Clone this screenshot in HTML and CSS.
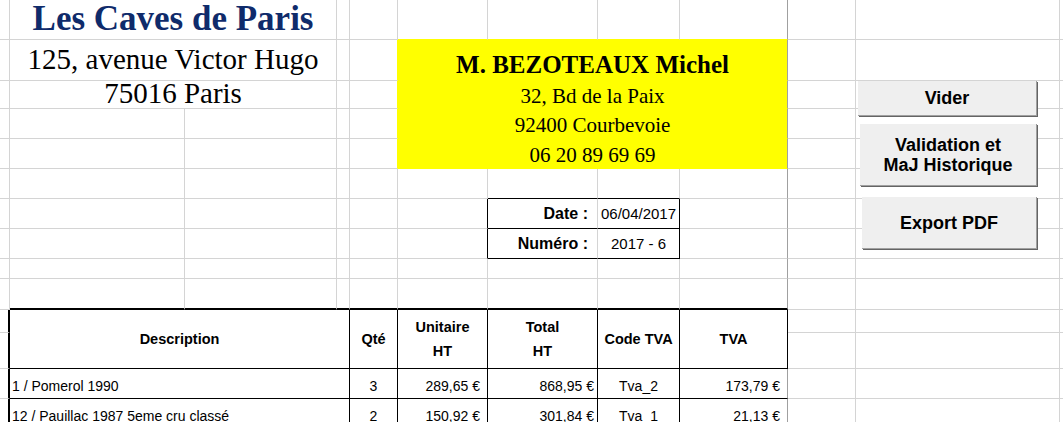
FILE: index.html
```html
<!DOCTYPE html>
<html lang="fr">
<head>
    <meta charset="UTF-8">
    <meta name="viewport" content="width=device-width, initial-scale=1.0">
    <title>Facture - Les Caves de Paris</title>
    <link rel="stylesheet" href="styles.css">
</head>
<body>
    <div class="sheet">
        <table class="grid">
            <colgroup>
                <col class="col-a"><col class="col-b"><col class="col-c"><col class="col-d">
                <col class="col-e"><col class="col-f"><col class="col-g"><col class="col-h">
                <col class="col-i"><col class="col-j"><col class="col-k"><col class="col-l">
            </colgroup>
            <tr class="row-1">
                <td></td>
                <td colspan="2" class="shop-name">Les Caves de Paris</td>
                <td></td><td></td>
                <td class="fill-top"></td><td class="fill-top"></td><td class="fill-top"></td>
                <td class="fill-top page-break"></td>
                <td></td><td></td><td></td>
            </tr>
            <tr class="row-2">
                <td></td>
                <td colspan="2" class="shop-address street">125, avenue Victor Hugo</td>
                <td></td><td class="fill-left"></td>
                <td colspan="4" class="client client-name page-break">M. BEZOTEAUX Michel</td>
                <td></td><td></td><td></td>
            </tr>
            <tr class="row-3">
                <td></td>
                <td colspan="2" class="shop-address city">75016 Paris</td>
                <td></td><td class="fill-left"></td>
                <td colspan="4" class="client client-line first page-break">32, Bd de la Paix</td>
                <td></td><td></td><td></td>
            </tr>
            <tr class="row-4">
                <td></td><td></td><td></td><td></td><td class="fill-left"></td>
                <td colspan="4" class="client client-line page-break">92400 Courbevoie</td>
                <td></td><td></td><td></td>
            </tr>
            <tr class="row-5">
                <td></td><td></td><td></td><td></td><td class="fill-left"></td>
                <td colspan="4" class="client client-line page-break">06 20 89 69 69</td>
                <td></td><td></td><td></td>
            </tr>
            <tr class="row-6">
                <td></td><td></td><td></td><td></td><td></td><td></td>
                <td class="edge-b"></td><td class="edge-b"></td>
                <td class="page-break"></td>
                <td></td><td></td><td></td>
            </tr>
            <tr class="row-7">
                <td></td><td></td><td></td><td></td><td></td>
                <td class="edge-r"></td>
                <td class="meta-label edge-b">Date :</td>
                <td class="meta-value edge-b edge-r">06/04/2017</td>
                <td class="page-break"></td>
                <td></td><td></td><td></td>
            </tr>
            <tr class="row-8">
                <td></td><td></td><td></td><td></td><td></td>
                <td class="edge-r"></td>
                <td class="meta-label edge-b">Numéro :</td>
                <td class="meta-value edge-b edge-r">2017 - 6</td>
                <td class="page-break"></td>
                <td></td><td></td><td></td>
            </tr>
            <tr class="row-9">
                <td></td><td></td><td></td><td></td><td></td><td></td>
                <td></td><td></td><td class="page-break"></td>
                <td></td><td></td><td></td>
            </tr>
            <tr class="row-10">
                <td></td>
                <td class="edge-b-thick"></td><td class="edge-b-thick"></td><td class="edge-b-thick"></td>
                <td class="edge-b-thick"></td><td class="edge-b-thick"></td><td class="edge-b-thick"></td>
                <td class="edge-b-thick"></td><td class="edge-b-thick page-break"></td>
                <td></td><td></td><td></td>
            </tr>
            <tr class="row-11">
                <td class="edge-r-thick"></td>
                <th colspan="3" rowspan="2">Description</th>
                <th rowspan="2">Qté</th>
                <th rowspan="2">Unitaire<br>HT</th>
                <th rowspan="2">Total<br>HT</th>
                <th rowspan="2">Code TVA</th>
                <th rowspan="2">TVA</th>
                <td></td><td></td><td></td>
            </tr>
            <tr class="row-12">
                <td class="edge-r-thick"></td>
                <td></td><td></td><td></td>
            </tr>
            <tr class="line-item">
                <td class="edge-r-thick"></td>
                <td colspan="3" class="item desc">1 / Pomerol 1990</td>
                <td class="item center">3</td>
                <td class="item amount unit">289,65 €</td>
                <td class="item amount total">868,95 €</td>
                <td class="item center">Tva_2</td>
                <td class="item amount vat page-break">173,79 €</td>
                <td></td><td></td><td></td>
            </tr>
            <tr class="line-item">
                <td class="edge-r-thick"></td>
                <td colspan="3" class="item desc">12 / Pauillac 1987 5eme cru classé</td>
                <td class="item center">2</td>
                <td class="item amount unit">150,92 €</td>
                <td class="item amount total">301,84 €</td>
                <td class="item center">Tva_1</td>
                <td class="item amount vat page-break">21,13 €</td>
                <td></td><td></td><td></td>
            </tr>
        </table>

        <div class="controls">
            <button class="sheet-btn btn-clear">Vider</button>
            <button class="sheet-btn btn-validate">Validation et<br>MaJ Historique</button>
            <button class="sheet-btn btn-export">Export PDF</button>
        </div>
    </div>
</body>
</html>
```

FILE: styles.css
```css
html, body {
    margin: 0;
    padding: 0;
    height: 422px;
    overflow: hidden;
    background-color: #fff;
}
body {
    font-family: 'Liberation Sans', Arial, sans-serif;
    color: #000;
}
.sheet {
    position: relative;
    width: 1063px;
    height: 422px;
    overflow: hidden;
}

/* spreadsheet grid */
.grid {
    table-layout: fixed;
    width: 1120px;
    border-collapse: separate;
    border-spacing: 0;
}
.col-a { width: 10px; }
.col-b { width: 175px; }
.col-c { width: 152px; }
.col-d { width: 13px; }
.col-e { width: 48px; }
.col-f { width: 90px; }
.col-g { width: 110px; }
.col-h { width: 82px; }
.col-i { width: 108px; }
.col-j { width: 68px; }
.col-k { width: 204px; }
.col-l { width: 60px; }

.row-1 { height: 40px; }
.row-2 { height: 41px; }
.row-3 { height: 28px; }
.row-4, .row-5, .row-6, .row-7, .row-8 { height: 30px; }
.row-9 { height: 20px; }
.row-10 { height: 31px; }
.row-11 { height: 23px; }
.row-12 { height: 36px; }
.line-item { height: 30px; }

.grid td, .grid th {
    padding: 0;
    border-right: 1px solid #d4d4d4;
    border-bottom: 1px solid #d4d4d4;
    white-space: nowrap;
    overflow: visible;
    vertical-align: bottom;
}

/* border helpers */
.grid .page-break { border-right-color: #a0a0a0; }
.grid .edge-b { border-bottom: 1px solid #000; }
.grid .edge-r { border-right: 1px solid #000; }
.grid .edge-b-thick { border-bottom: 2px solid #000; }
.grid .edge-r-thick { border-right: 2px solid #000; }
.grid .fill-top { border-bottom-color: #ffff00; }
.grid .fill-left { border-right-color: #ffff00; }

/* shop header */
.shop-name {
    font-family: 'Liberation Serif', 'Times New Roman', serif;
    font-weight: bold;
    font-size: 35px;
    line-height: 30px;
    padding-bottom: 5px !important;
    color: #0f2b6b;
    text-align: center;
}
.shop-address {
    font-family: 'Liberation Serif', 'Times New Roman', serif;
    font-size: 29px;
    text-align: center;
}
.shop-address.street {
    line-height: 26px;
    padding-bottom: 8px !important;
}
.shop-address.city {
    line-height: 20px;
    padding-bottom: 5px !important;
}

/* client block */
.grid .client {
    background-color: #ffff00;
    border-bottom-color: #ffff00;
    font-family: 'Liberation Serif', 'Times New Roman', serif;
    text-align: center;
}
.client-name {
    font-weight: bold;
    font-size: 25px;
    line-height: 24px;
    padding-bottom: 3px !important;
}
.client-line {
    font-size: 21px;
    line-height: 20px;
    padding-bottom: 3px !important;
}
.client-line.first {
    padding-bottom: 2px !important;
}

/* date / number box */
.grid .meta-label {
    font-weight: bold;
    font-size: 16px;
    line-height: 18px;
    text-align: right;
    padding-right: 9px;
    vertical-align: middle;
}
.grid .meta-value {
    font-size: 15px;
    line-height: 18px;
    text-align: center;
    vertical-align: middle;
}

/* invoice lines */
.grid th {
    font-size: 14.5px;
    font-weight: bold;
    line-height: 24px;
    text-align: center;
    vertical-align: middle;
    border-right: 1px solid #000;
    border-bottom: 1px solid #000;
}
.grid .item {
    font-size: 14px;
    line-height: 16px;
    padding-bottom: 4px;
    border-bottom: 1px solid #000;
    border-right: 1px solid #000;
}
.grid .item.page-break { border-right-color: #a0a0a0; }
.item.desc { padding-left: 2px; }
.item.center { text-align: center; }
.item.amount { text-align: right; }
.item.unit { padding-right: 7px; }
.item.total { padding-right: 3px; }
.item.vat { padding-right: 7px; }

/* form buttons floating over the sheet */
.controls {
    position: absolute;
    left: 857px;
    top: 81px;
    width: 180px;
    display: flex;
    flex-direction: column;
    align-items: flex-end;
}
.sheet-btn {
    box-sizing: border-box;
    display: flex;
    align-items: center;
    justify-content: center;
    margin: 0;
    padding: 0;
    background-color: #efefef;
    border: none;
    border-right: 1px solid #a0a0a0;
    border-bottom: 1px solid #a0a0a0;
    box-shadow: 1px 1px 0 #646464;
    font-family: 'Liberation Sans', Arial, sans-serif;
    font-weight: bold;
    font-size: 18px;
    line-height: 20px;
    color: #000;
    text-align: center;
}
.btn-clear {
    width: 179px;
    height: 35px;
}
.btn-validate {
    width: 177px;
    height: 62px;
    margin-top: 8px;
}
.btn-export {
    width: 175px;
    height: 52px;
    margin-top: 11px;
}
```
